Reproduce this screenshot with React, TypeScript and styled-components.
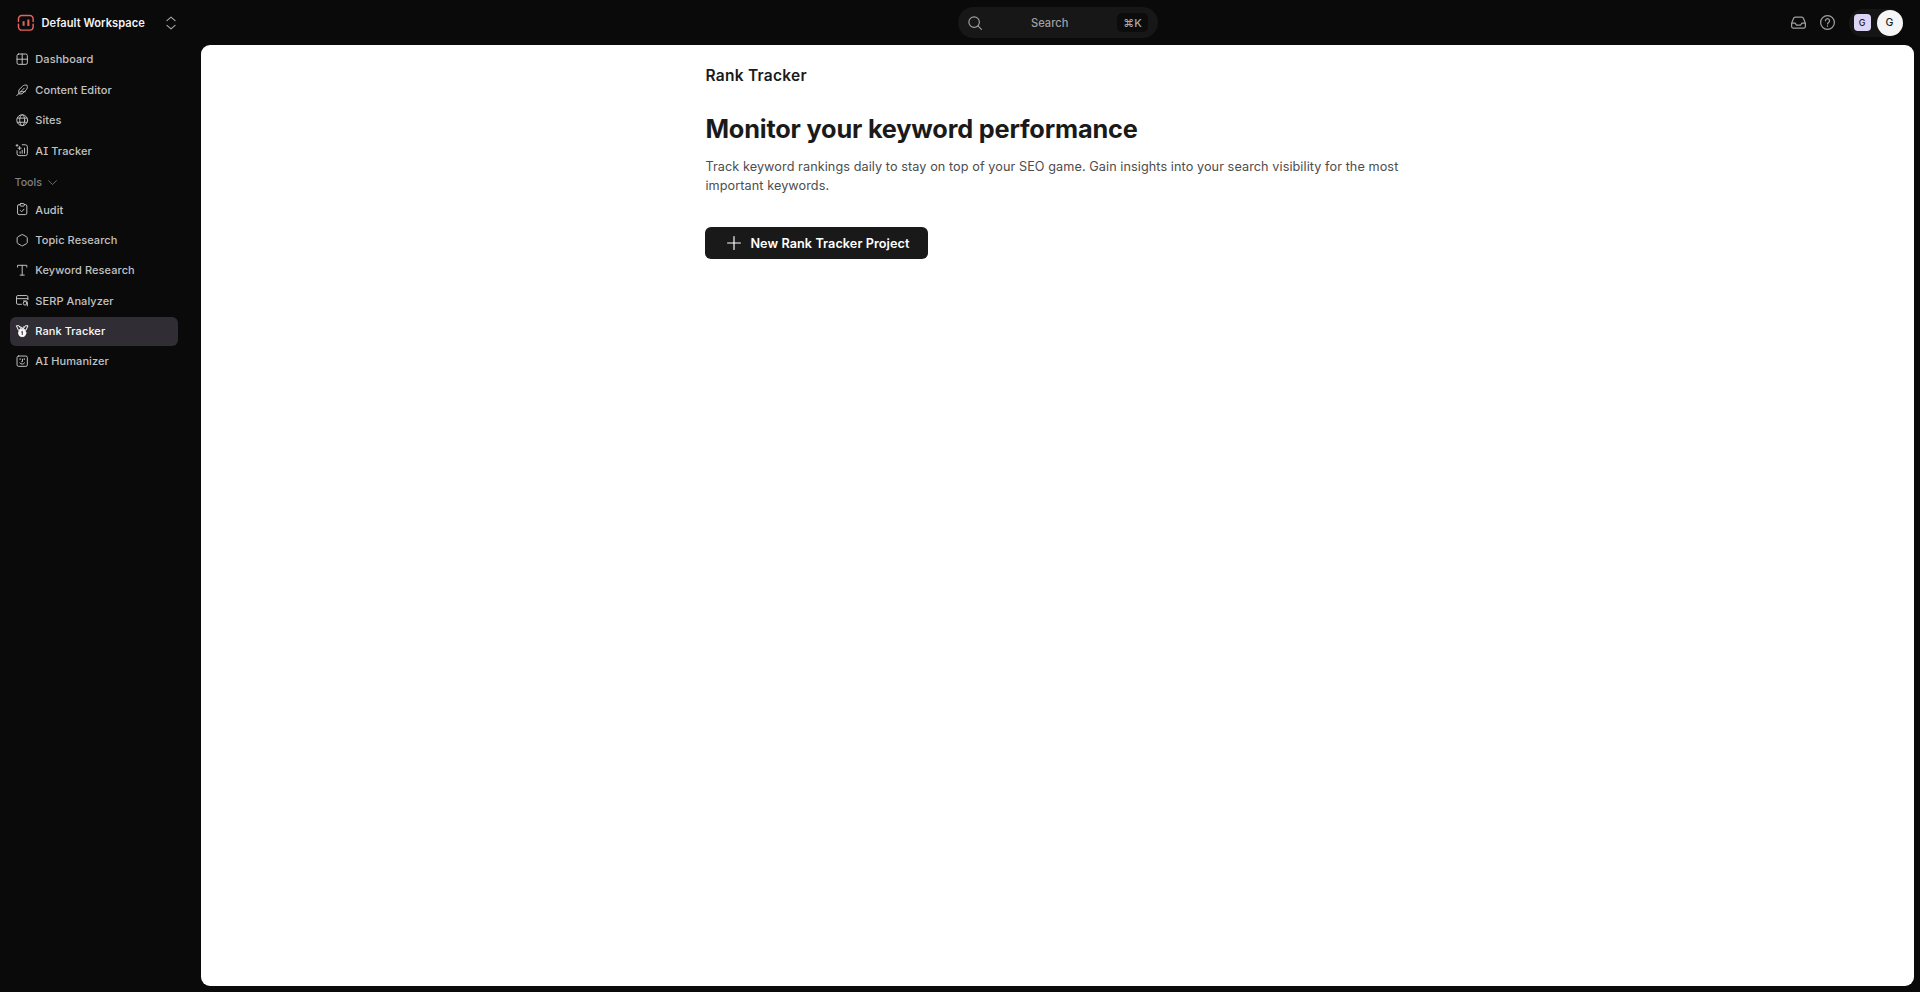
import type {ReactNode} from 'react';

import styled, {createGlobalStyle} from 'styled-components';

type NavItem = {
    label: string;
    icon: ReactNode;
    active?: boolean;
};

const mainItems: NavItem[] = [
    {
        label: 'Dashboard',
        icon: <><rect x="2" y="2" width="20" height="20" rx="3" /><path d="M12 2v20M2 12h20" /></>,
    },
    {
        label: 'Content Editor',
        icon: <><path d="M1.5 22.5 16 8M18 15H9" /><path d="M5.5 18.5v-7l7-7C15 2 18 1.500 21.500 2.500c1 3.500.5 6.500-2 9l-7 7z" /></>,
    },
    {
        label: 'Sites',
        icon: <><circle cx="12" cy="12" r="10.500" /><ellipse cx="12" cy="12" rx="4.800" ry="10.500" /><path d="M2.800 8h18.400M2.800 16h18.400" /></>,
    },
    {
        label: 'AI Tracker',
        icon: <><path d="M12 1.500h6a4 4 0 0 1 4 4v13a4 4 0 0 1-4 4H6a4 4 0 0 1-4-4V13" /><path d="M8 18v-3M12 18v-6M16.500 18V8" /><path d="M7 5v6M4 8h6M2 1v3.500M.2 2.700h3.600" /></>,
    },
];

const toolItems: NavItem[] = [
    {
        label: 'Audit',
        icon: <><path d="M8 3H6a3 3 0 0 0-3 3v13.500a3 3 0 0 0 3 3h12a3 3 0 0 0 3-3V6a3 3 0 0 0-3-3h-2" /><rect x="8" y="1" width="8" height="5" rx="1.500" /><path d="m8.500 14.500 2.500 2.500 4.500-5" /></>,
    },
    {
        label: 'Topic Research',
        icon: <path d="M10.700 1.400a2.600 2.600 0 0 1 2.600 0l7.200 4.100a2.600 2.600 0 0 1 1.300 2.300v8.400a2.600 2.600 0 0 1-1.300 2.300l-7.200 4.100a2.600 2.600 0 0 1-2.600 0l-7.200-4.100a2.600 2.600 0 0 1-1.300-2.300V7.800a2.600 2.600 0 0 1 1.300-2.300z" />,
    },
    {
        label: 'Keyword Research',
        icon: <path d="M3 6V2.500h18V6M12 2.500v19M8 21.500h8" />,
    },
    {
        label: 'SERP Analyzer',
        icon: <><path d="M10.500 20h-7A2.500 2.500 0 0 1 1 17.500v-12A2.500 2.500 0 0 1 3.500 3h17A2.500 2.500 0 0 1 23 5.500V11M1 9h22" /><circle cx="17.500" cy="18" r="3.500" /><path d="M14.500 13.500h5a2.500 2.500 0 0 1 2.500 2.500v7" /></>,
    },
    {
        label: 'Rank Tracker',
        active: true,
        icon: <><path d="M1.500 1.500h4.500L10 8 5.500 10zM22.500 1.500H18L14 8l4.500 2zM9.500 3.500 12 7.500l2.500-4" /><circle cx="12" cy="15.500" r="7" fill="currentColor" /><path d="m10.800 13.300 1.400-1v6.200" stroke="#302e34" /></>,
    },
    {
        label: 'AI Humanizer',
        icon: <><rect x="2" y="2" width="20" height="20" rx="3" /><path d="M8 7v2M16 7v2M12.500 8v5H11M7.500 15.500c2.500 3 6.500 3 9 0" /></>,
    },
];

const App = () => (
    <StyledShell>
        <GlobalStyle />
        <StyledHeader>
            <StyledWorkspace>
                <StyledIcon $size={17.6} $stroke={2} $color="#e4635f" viewBox="0 0 24 24">
                    <path d="M2 10.200V6.500A4.500 4.500 0 0 1 6.500 2h11A4.500 4.500 0 0 1 22 6.500v3.700M2 13.800v3.700A4.500 4.500 0 0 0 6.500 22h11a4.500 4.500 0 0 0 4.500-4.500v-3.700" />
                    <path d="M9 10v6M15.500 7.500v9" strokeWidth="2.800" strokeLinecap="butt" />
                </StyledIcon>
                <StyledWorkspaceName>Default Workspace</StyledWorkspaceName>
                <StyledIcon $size={14} $stroke={2} $color="#a5a5a5" viewBox="0 0 24 24">
                    <path d="m5 8 7-6 7 6M5 16l7 6 7-6" />
                </StyledIcon>
            </StyledWorkspace>
            <StyledSearch type="button">
                <StyledIcon $size={14} $stroke={2} $color="#a0a0a0" viewBox="0 0 24 24">
                    <circle cx="10.500" cy="10.500" r="9" />
                    <path d="m17 17 6 6" />
                </StyledIcon>
                <StyledSearchLabel>Search</StyledSearchLabel>
                <StyledShortcut>⌘K</StyledShortcut>
            </StyledSearch>
            <StyledActions>
                <StyledIcon $size={15} $stroke={2} $color="#a0a0a0" viewBox="0 0 24 24">
                    <path d="M1 13h5.500l2 3h7l2-3H23M1 13l3-7.500A3 3 0 0 1 6.800 3.500h10.400A3 3 0 0 1 20 5.500l3 7.500v5.500a2.500 2.500 0 0 1-2.500 2.500h-17A2.500 2.500 0 0 1 1 18.500z" />
                </StyledIcon>
                <StyledIcon $size={15} $stroke={2} $color="#a0a0a0" viewBox="0 0 24 24">
                    <circle cx="12" cy="12" r="11" />
                    <path d="M8.700 9.200a3.300 3.300 0 1 1 5 2.800c-1.100.7-1.700 1.200-1.700 2.300M12 17.300v.6" />
                </StyledIcon>
                <StyledAccount>
                    <StyledTeamBadge>G</StyledTeamBadge>
                    <StyledAvatar>G</StyledAvatar>
                </StyledAccount>
            </StyledActions>
        </StyledHeader>
        <StyledBody>
            <StyledSidebar>
                <NavList items={mainItems} />
                <StyledGroupTitle>
                    Tools
                    <StyledIcon $size={9} $stroke={2.4} $color="#77777c" viewBox="0 0 24 24">
                        <path d="m1.500 7 10.500 10.500L22.500 7" />
                    </StyledIcon>
                </StyledGroupTitle>
                <NavList items={toolItems} />
            </StyledSidebar>
            <StyledMain>
                <StyledContent>
                    <StyledPageTitle>Rank Tracker</StyledPageTitle>
                    <StyledHeading>Monitor your keyword performance</StyledHeading>
                    <StyledDescription>
                        Track keyword rankings daily to stay on top of your SEO game. Gain insights into your search
                        visibility for the most important keywords.
                    </StyledDescription>
                    <StyledPrimaryButton type="button">
                        <StyledIcon $size={14} $stroke={2} $color="#fff" viewBox="0 0 24 24">
                            <path d="M12 1v22M1 12h22" />
                        </StyledIcon>
                        New Rank Tracker Project
                    </StyledPrimaryButton>
                </StyledContent>
            </StyledMain>
        </StyledBody>
    </StyledShell>
);

const NavList = ({items}: {items: NavItem[]}) => (
    <StyledNav>
        {items.map(({label, icon, active = false}) => (
            <StyledNavItem key={label} href="#" $active={active}>
                <StyledIcon $size={12.4} $stroke={1.9} viewBox="0 0 24 24">{icon}</StyledIcon>
                {label}
            </StyledNavItem>
        ))}
    </StyledNav>
);

export default App;

const GlobalStyle = createGlobalStyle`
    * {
        box-sizing: border-box;
    }

    body {
        margin: 0;
        background: #0a0a0a;
        font-family: Inter, sans-serif;
    }

    button {
        font-family: inherit;
    }
`;

const StyledShell = styled.div`
    display: flex;
    flex-direction: column;
    height: 100vh;
    padding: 0 6.5px 6.5px 0;
    overflow: hidden;
    background: #0a0a0a;
`;

const StyledHeader = styled.header`
    display: grid;
    grid-template-columns: 1fr 200px 1fr;
    align-items: center;
    flex: none;
    height: 45px;
    padding-left: 201.5px;
`;

const StyledWorkspace = styled.div`
    display: flex;
    align-items: center;
    width: 161.5px;
    margin-left: -184.8px;
`;

const StyledWorkspaceName = styled.strong`
    flex: 1;
    margin-left: 7.2px;
    color: #f4f4f4;
    font-size: 11.1px;
    font-weight: 600;
    letter-spacing: 0.05px;
    white-space: nowrap;
`;

const StyledIcon = styled.svg<{$size: number; $stroke: number; $color?: string}>`
    flex: none;
    width: ${({$size}) => $size}px;
    height: ${({$size}) => $size}px;
    overflow: visible;
    fill: none;
    stroke: currentColor;
    stroke-width: ${({$stroke}) => $stroke};
    stroke-linecap: round;
    stroke-linejoin: round;
    color: ${({$color}) => $color ?? 'inherit'};
`;

const StyledSearch = styled.button`
    display: flex;
    align-items: center;
    justify-content: space-between;
    width: 200px;
    height: 31px;
    padding: 0 9.5px 0 10px;
    border: none;
    border-radius: 16px;
    background: #171717;
    color: #a0a0a0;
`;

const StyledSearchLabel = styled.span`
    padding-left: 1px;
    font-size: 11.1px;
    font-weight: 500;
    letter-spacing: 0.05px;
`;

const StyledShortcut = styled.kbd`
    display: flex;
    align-items: center;
    justify-content: center;
    width: 31px;
    height: 19px;
    border-radius: 5px;
    background: #0c0c0c;
    color: #a8a8a8;
    font-family: inherit;
    font-size: 11px;
    font-weight: 500;
`;

const StyledActions = styled.div`
    display: flex;
    align-items: center;
    justify-content: flex-end;
    gap: 14px;
    padding-right: 11px;
`;

const StyledAccount = styled.div`
    display: flex;
    align-items: center;
    gap: 6px;
    height: 28px;
    padding-left: 5px;
    border-radius: 14px;
    background: #151516;
`;

const StyledTeamBadge = styled.span`
    display: flex;
    align-items: center;
    justify-content: center;
    width: 17px;
    height: 17px;
    border-radius: 4px;
    background: #dcd5f6;
    color: #1c1c20;
    font-size: 9px;
    font-weight: 500;
`;

const StyledAvatar = styled.span`
    display: flex;
    align-items: center;
    justify-content: center;
    width: 26px;
    height: 26px;
    border-radius: 50%;
    background: #f6f6f6;
    color: #1c1c1c;
    font-size: 10.5px;
    font-weight: 500;
`;

const StyledBody = styled.div`
    display: flex;
    flex: 1;
    min-height: 0;
`;

const StyledSidebar = styled.aside`
    flex: none;
    width: 201.4px;
    padding: 0 23.4px 0 9.5px;
`;

const StyledNav = styled.nav`
    display: flex;
    flex-direction: column;
    gap: 1.5px;
`;

const StyledNavItem = styled.a<{$active: boolean}>`
    display: flex;
    align-items: center;
    gap: 6.8px;
    height: 28.9px;
    padding-left: 6.6px;
    border-radius: 6px;
    background: ${({$active}) => ($active ? '#302e34' : 'transparent')};
    color: ${({$active}) => ($active ? '#fafafa' : '#c2c2c4')};
    font-size: 11px;
    font-weight: 500;
    font-feature-settings: 'cv08';
    letter-spacing: 0.08px;
    text-decoration: none;
`;

const StyledGroupTitle = styled.div`
    display: flex;
    align-items: center;
    gap: 6px;
    height: 30px;
    padding: 4.5px 0 0 5px;
    color: #808085;
    font-size: 10.7px;
    font-weight: 500;
`;

const StyledMain = styled.main`
    flex: 1;
    border-radius: 9px;
    background: #fff;
`;

const StyledContent = styled.section`
    width: 704px;
    margin: 0 auto;
    padding-top: 20px;
    color: #1a1a1a;
`;

const StyledPageTitle = styled.h2`
    margin: 0;
    font-size: 15.5px;
    font-weight: 600;
    line-height: 22px;
    letter-spacing: 0.27px;
`;

const StyledHeading = styled.h1`
    margin: 25px 0 0;
    font-size: 25.3px;
    font-weight: 700;
    line-height: 34px;
    letter-spacing: -0.18px;
`;

const StyledDescription = styled.p`
    margin: 11px 0 0;
    color: #4d4d4d;
    font-size: 12.67px;
    line-height: 19px;
    letter-spacing: 0.08px;
`;

const StyledPrimaryButton = styled.button`
    display: flex;
    align-items: center;
    gap: 9px;
    height: 32px;
    margin-top: 32px;
    padding: 0 19px 0 22px;
    border: none;
    border-radius: 6px;
    background: #19191a;
    color: #fff;
    font-size: 12.67px;
    font-weight: 600;
    letter-spacing: 0.07px;
    white-space: nowrap;
`;
